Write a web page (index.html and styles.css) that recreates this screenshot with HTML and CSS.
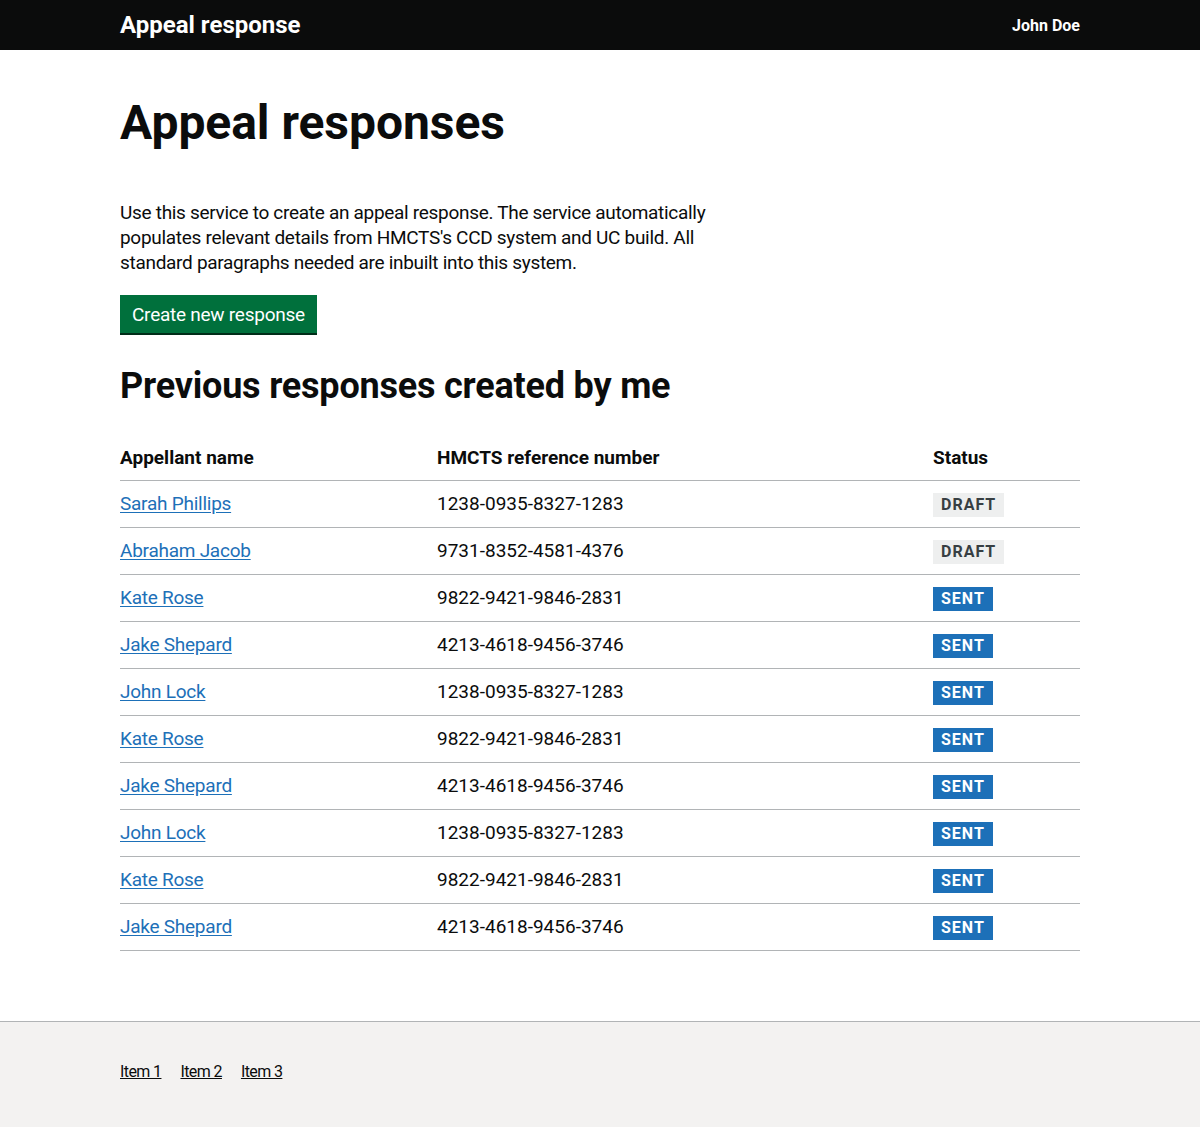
FILE: index.html
```html
<!DOCTYPE html>
<html lang="en">
<head>
<meta charset="utf-8">
<title>Appeal responses</title>
<link rel="stylesheet" href="styles.css">
</head>
<body>
<header class="header">
  <div class="container header-inner">
    <a class="service-name" href="#">Appeal response</a>
    <span class="user">John Doe</span>
  </div>
</header>
<main class="main">
  <div class="container">
    <h1 class="h1">Appeal responses</h1>
    <p class="body-text">Use this service to create an appeal response. The service automatically populates relevant details from HMCTS's CCD system and UC build. All standard paragraphs needed are inbuilt into this system.</p>
    <a class="button" href="#">Create new response</a>
    <h2 class="h2">Previous responses created by me</h2>
    <table class="table">
      <thead>
        <tr>
          <th class="col-name">Appellant name</th>
          <th class="col-ref">HMCTS reference number</th>
          <th class="col-status">Status</th>
        </tr>
      </thead>
      <tbody>
        <tr><td><a href="#" class="link">Sarah Phillips</a></td><td>1238-0935-8327-1283</td><td><span class="tag tag-grey">Draft</span></td></tr>
        <tr><td><a href="#" class="link">Abraham Jacob</a></td><td>9731-8352-4581-4376</td><td><span class="tag tag-grey">Draft</span></td></tr>
        <tr><td><a href="#" class="link">Kate Rose</a></td><td>9822-9421-9846-2831</td><td><span class="tag">Sent</span></td></tr>
        <tr><td><a href="#" class="link">Jake Shepard</a></td><td>4213-4618-9456-3746</td><td><span class="tag">Sent</span></td></tr>
        <tr><td><a href="#" class="link">John Lock</a></td><td>1238-0935-8327-1283</td><td><span class="tag">Sent</span></td></tr>
        <tr><td><a href="#" class="link">Kate Rose</a></td><td>9822-9421-9846-2831</td><td><span class="tag">Sent</span></td></tr>
        <tr><td><a href="#" class="link">Jake Shepard</a></td><td>4213-4618-9456-3746</td><td><span class="tag">Sent</span></td></tr>
        <tr><td><a href="#" class="link">John Lock</a></td><td>1238-0935-8327-1283</td><td><span class="tag">Sent</span></td></tr>
        <tr><td><a href="#" class="link">Kate Rose</a></td><td>9822-9421-9846-2831</td><td><span class="tag">Sent</span></td></tr>
        <tr><td><a href="#" class="link">Jake Shepard</a></td><td>4213-4618-9456-3746</td><td><span class="tag">Sent</span></td></tr>
      </tbody>
    </table>
  </div>
</main>
<footer class="footer">
  <div class="container footer-links">
    <a href="#" class="footer-link">Item 1</a>
    <a href="#" class="footer-link">Item 2</a>
    <a href="#" class="footer-link">Item 3</a>
  </div>
</footer>
</body>
</html>
```
FILE: styles.css
```css
* { box-sizing: border-box; }
html, body { margin: 0; padding: 0; }
body {
  font-family: Roboto, "Liberation Sans", Arial, sans-serif;
  color: #0b0c0c;
  background: #f3f2f1;
  -webkit-font-smoothing: antialiased;
}
.container {
  width: 960px;
  margin: 0 auto;
}
.header {
  background: #0b0c0c;
  height: 50px;
}
.header-inner {
  height: 50px;
  display: flex;
  align-items: center;
  justify-content: space-between;
}
.service-name {
  color: #fff;
  font-weight: 700;
  font-size: 24px;
  text-decoration: none;
}
.user {
  color: #fff;
  font-weight: 700;
  font-size: 16px;
}
.main {
  background: #fff;
  padding: 48px 0 40px;
}
.h1 {
  font-size: 48px;
  line-height: 50px;
  font-weight: 700;
  margin: 0 0 52px;
  letter-spacing: -0.05px;
}
.body-text {
  font-size: 19px;
  line-height: 25px;
  margin: 0 0 20px;
  max-width: 610px;
  letter-spacing: -0.3px;
}
.button {
  display: inline-block;
  background: #00703c;
  color: #fff;
  font-size: 19px;
  line-height: 19px;
  padding: 10px 12px 9px;
  text-decoration: none;
  box-shadow: 0 2px 0 #002d18;
  margin-bottom: 33px;
  letter-spacing: -0.25px;
}
.h2 {
  font-size: 36px;
  line-height: 40px;
  font-weight: 700;
  margin: 0 0 29px;
  letter-spacing: -0.2px;
}
.table {
  width: 960px;
  border-collapse: collapse;
  border-spacing: 0;
  margin: 0 0 30px;
  font-size: 19px;
}
.table th, .table td {
  text-align: left;
  padding: 10px 20px 10px 0;
  border-bottom: 1px solid #b1b4b6;
  line-height: 25px;
  vertical-align: top;
}
.table th { font-weight: 700; }
.col-name { width: 317px; }
.col-ref { width: 496px; }
.col-status { width: 147px; }
.link {
  color: #1d70b8;
  text-decoration: underline;
  text-underline-offset: 2px;
  letter-spacing: -0.25px;
}
.tag {
  display: inline-block;
  background: #1d70b8;
  color: #fff;
  font-size: 16px;
  line-height: 16px;
  font-weight: 700;
  text-transform: uppercase;
  letter-spacing: 1px;
  padding: 4px 8px 4px;
}
.tag-grey {
  background: #eeefef;
  color: #383f43;
}
.footer {
  border-top: 1px solid #b1b4b6;
  background: #f3f2f1;
  padding: 40px 0 60px;
}
.footer-links {
  display: flex;
  gap: 19px;
}
.footer-link {
  color: #0b0c0c;
  font-size: 16px;
  text-decoration: underline;
  letter-spacing: -0.6px;
}
```
